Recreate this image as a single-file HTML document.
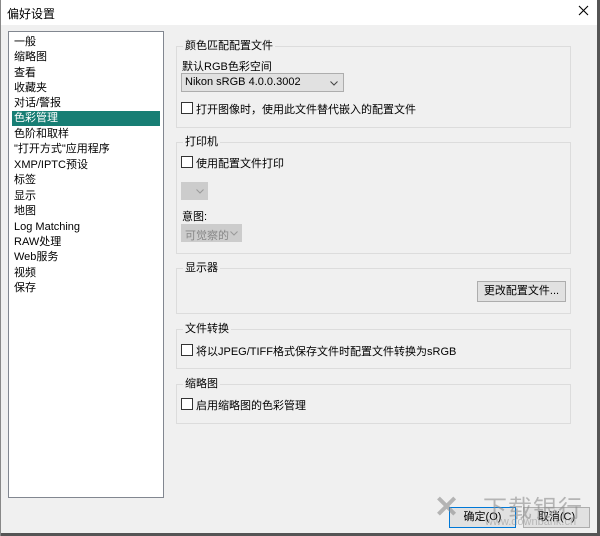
<!DOCTYPE html>
<html><head><meta charset="utf-8"><style>
*{margin:0;padding:0;box-sizing:border-box}
body{width:600px;height:536px;overflow:hidden;background:#f0f0f0;font-family:"Liberation Sans","Noto Sans CJK SC",sans-serif;font-size:11px;color:#000;position:relative}
.a{position:absolute;white-space:nowrap}
.title{left:0;top:0;width:600px;height:25px;background:#fff}
.list{left:8px;top:31px;width:156px;height:467px;background:#fff;border:1px solid #828790}
.it{position:absolute;left:5px;height:15px;line-height:15px}
.sel{left:3px;width:148px;background:#177e74;color:#fff;padding-left:2px}
.grp{position:absolute;left:176px;width:395px;border:1px solid #dcdcdc}
.gt{position:absolute;left:183px;background:#f0f0f0;padding:0 2px;line-height:12px}
.cb{position:absolute;left:181px;width:12px;height:12px;border:1px solid #333;background:#fff}
.combo{position:absolute;border:1px solid #adadad;background:#e1e1e1}
.btn{position:absolute;border:1px solid #adadad;background:#e1e1e1;text-align:center}
.chev{position:absolute}
</style></head><body>
<div class="a title"></div>
<div class="a" style="left:7px;top:5px;font-size:12px">偏好设置</div>
<svg class="a" style="left:578px;top:5px" width="11" height="11"><path d="M1 1L10 10M10 1L1 10" stroke="#000" stroke-width="1.1"/></svg>
<div class="a" style="left:597px;top:0;width:3px;height:536px;background:#555"></div>
<div class="a" style="left:0;top:533px;width:600px;height:3px;background:#555"></div>
<div class="a" style="left:0;top:0;width:1px;height:536px;background:#888"></div>
<div class="a list">
<div class="it" style="top:3px">一般</div>
<div class="it" style="top:18px">缩略图</div>
<div class="it" style="top:34px">查看</div>
<div class="it" style="top:49px">收藏夹</div>
<div class="it" style="top:64px">对话/警报</div>
<div class="it sel" style="top:79px">色彩管理</div>
<div class="it" style="top:95px">色阶和取样</div>
<div class="it" style="top:110px">"打开方式"应用程序</div>
<div class="it" style="top:126px">XMP/IPTC预设</div>
<div class="it" style="top:141px">标签</div>
<div class="it" style="top:157px">显示</div>
<div class="it" style="top:172px">地图</div>
<div class="it" style="top:188px">Log Matching</div>
<div class="it" style="top:203px">RAW处理</div>
<div class="it" style="top:218px">Web服务</div>
<div class="it" style="top:234px">视频</div>
<div class="it" style="top:249px">保存</div>
</div>

<div class="grp" style="top:46px;height:82px"></div>
<div class="gt" style="top:40px">颜色匹配配置文件</div>
<div class="a" style="left:182px;top:58px">默认RGB色彩空间</div>
<div class="combo" style="left:181px;top:73px;width:163px;height:19px"><span class="a" style="left:3px;top:2px">Nikon sRGB 4.0.0.3002</span><svg class="chev" style="left:148px;top:7px" width="8" height="5"><path d="M0.5 0.5L4 4L7.5 0.5" fill="none" stroke="#444"/></svg></div>
<div class="cb" style="top:102px"></div>
<div class="a" style="left:196px;top:101px">打开图像时，使用此文件替代嵌入的配置文件</div>

<div class="grp" style="top:142px;height:112px"></div>
<div class="gt" style="top:136px">打印机</div>
<div class="cb" style="top:156px"></div>
<div class="a" style="left:196px;top:155px">使用配置文件打印</div>
<div class="combo" style="left:181px;top:182px;width:27px;height:18px;background:#ccc;border-color:#ccc"><svg class="chev" style="left:14px;top:6px" width="8" height="5"><path d="M0.5 0.5L4 4L7.5 0.5" fill="none" stroke="#999"/></svg></div>
<div class="a" style="left:182px;top:208px">意图:</div>
<div class="combo" style="left:181px;top:224px;width:61px;height:18px;background:#ccc;border-color:#ccc"><span class="a" style="left:3px;top:2px;color:#888">可觉察的</span><svg class="chev" style="left:48px;top:6px" width="8" height="5"><path d="M0.5 0.5L4 4L7.5 0.5" fill="none" stroke="#999"/></svg></div>

<div class="grp" style="top:268px;height:46px"></div>
<div class="gt" style="top:262px">显示器</div>
<div class="btn" style="left:477px;top:281px;width:89px;height:21px;line-height:19px">更改配置文件...</div>

<div class="grp" style="top:329px;height:40px"></div>
<div class="gt" style="top:323px">文件转换</div>
<div class="cb" style="top:344px"></div>
<div class="a" style="left:196px;top:343px">将以JPEG/TIFF格式保存文件时配置文件转换为sRGB</div>

<div class="grp" style="top:384px;height:40px"></div>
<div class="gt" style="top:378px">缩略图</div>
<div class="cb" style="top:398px"></div>
<div class="a" style="left:196px;top:397px">启用缩略图的色彩管理</div>

<div class="btn" style="left:449px;top:507px;width:67px;height:21px;line-height:19px;border:1px solid #0078d7">确定(O)</div>
<div class="btn" style="left:523px;top:507px;width:67px;height:21px;line-height:19px">取消(C)</div>
<div class="a" style="left:434px;top:490px;font-size:30px;color:rgba(140,140,140,.6);font-weight:bold">✕</div>
<div class="a" style="left:483px;top:489px;font-size:24px;color:rgba(140,140,140,.6);letter-spacing:1px">下载银行</div>
<div class="a" style="left:485px;top:516px;font-size:11px;color:rgba(140,140,140,.5)">www.downbank.cn</div>
</body></html>
